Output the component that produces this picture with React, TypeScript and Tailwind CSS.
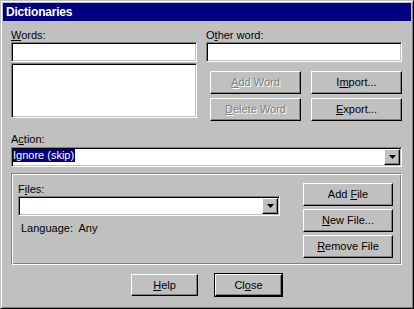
import React from "react";

const raised =
  "bg-[#c0c0c0] border border-t-white border-l-white border-r-black border-b-black shadow-[inset_-1px_-1px_0_#808080] flex items-center justify-center leading-none";
const sunken =
  "bg-white border border-t-[#808080] border-l-[#808080] border-r-white border-b-white shadow-[inset_1px_1px_0_#000,inset_-1px_-1px_0_#c0c0c0]";
const disabledText = "text-[#808080] [text-shadow:1px_1px_0_#fff]";

function U({ children }: { children: React.ReactNode }) {
  return <span className="underline underline-offset-[1px]">{children}</span>;
}

function Arrow() {
  return (
    <div className={`${raised} w-[16px] h-[16px] shrink-0`}>
      <svg width="7" height="4" viewBox="0 0 7 4" className="block">
        <path d="M0 0h7L3.5 4z" fill="#000" />
      </svg>
    </div>
  );
}

export default function App() {
  return (
    <div className="w-[414px] h-[309px] bg-[#c0c0c0] border border-t-[#c0c0c0] border-l-[#c0c0c0] border-r-black border-b-black shadow-[inset_1px_1px_0_#fff,inset_-1px_-1px_0_#808080] p-[2px] font-['Liberation_Sans',Arial,sans-serif] text-[11px] text-black flex flex-col">
      <div className="h-[18px] shrink-0 bg-[#000080] text-white font-bold text-[12px] tracking-[-0.2px] pl-[3px] flex items-center leading-none">
        Dictionaries
      </div>
      <div className="pl-[8px] pr-[9px] flex flex-col">
        <div className="mt-[8px] flex items-start">
          <div className="w-[186px] flex flex-col">
            <div className="h-[13px] leading-[13px]">
              <U>W</U>ords:
            </div>
            <div className={`${sunken} h-[20px]`} />
            <div className={`${sunken} h-[55px] mt-[1px]`} />
          </div>
          <div className="w-[196px] ml-[9px] flex flex-col">
            <div className="h-[13px] leading-[13px]">
              O<U>t</U>her word:
            </div>
            <div className={`${sunken} h-[20px]`} />
            <div className="mt-[9px] pl-[4px] flex flex-col gap-[4px]">
              <div className="flex gap-[10px]">
                <div className={`${raised} w-[91px] h-[23px]`}>
                  <span className={disabledText}>
                    <U>A</U>dd Word
                  </span>
                </div>
                <div className={`${raised} w-[91px] h-[23px]`}>
                  <span>
                    I<U>m</U>port...
                  </span>
                </div>
              </div>
              <div className="flex gap-[10px]">
                <div className={`${raised} w-[91px] h-[23px]`}>
                  <span className={disabledText}>
                    <U>D</U>elete Word
                  </span>
                </div>
                <div className={`${raised} w-[91px] h-[23px]`}>
                  <span>
                    <U>E</U>xport...
                  </span>
                </div>
              </div>
            </div>
          </div>
        </div>

        <div className="mt-[12px] h-[13px] leading-[13px]">
          A<U>c</U>tion:
        </div>
        <div className={`${sunken} mt-[1px] h-[20px] p-[1px] flex items-start`}>
          <div className="flex-1 h-[16px] flex items-start">
            <span className="bg-[#000080] text-white h-[13px] leading-[13px] pr-[1px]">
              Ignore (skip)
            </span>
          </div>
          <Arrow />
        </div>

        <div className="mt-[6px] w-[391px] h-[92px] border border-t-[#808080] border-l-[#808080] border-r-white border-b-white shadow-[inset_1px_1px_0_#fff,inset_-1px_-1px_0_#808080] pt-[9px] pl-[6px] flex items-start">
          <div className="w-[262px] flex flex-col">
            <div className="h-[13px] leading-[13px]">
              F<U>i</U>les:
            </div>
            <div className={`${sunken} h-[20px] p-[1px] flex items-start`}>
              <div className="flex-1" />
              <Arrow />
            </div>
            <div className="mt-[6px] pl-[3px] h-[13px] leading-[13px]">
              Language:&nbsp; Any
            </div>
          </div>
          <div className="ml-[23px] flex flex-col gap-[3px]">
            <div className={`${raised} w-[90px] h-[23px]`}>
              <span>
                Add <U>F</U>ile
              </span>
            </div>
            <div className={`${raised} w-[90px] h-[23px]`}>
              <span>
                <U>N</U>ew File...
              </span>
            </div>
            <div className={`${raised} w-[90px] h-[23px]`}>
              <span>
                <U>R</U>emove File
              </span>
            </div>
          </div>
        </div>

        <div className="mt-[8px] flex items-start">
          <div className={`${raised} ml-[120px] mt-[1px] w-[67px] h-[22px]`}>
            <span>
              <U>H</U>elp
            </span>
          </div>
          <div className="ml-[16px] w-[69px] h-[24px] border border-black">
            <div className={`${raised} w-full h-full`}>
              <span>
                Cl<U>o</U>se
              </span>
            </div>
          </div>
        </div>
      </div>
    </div>
  );
}
